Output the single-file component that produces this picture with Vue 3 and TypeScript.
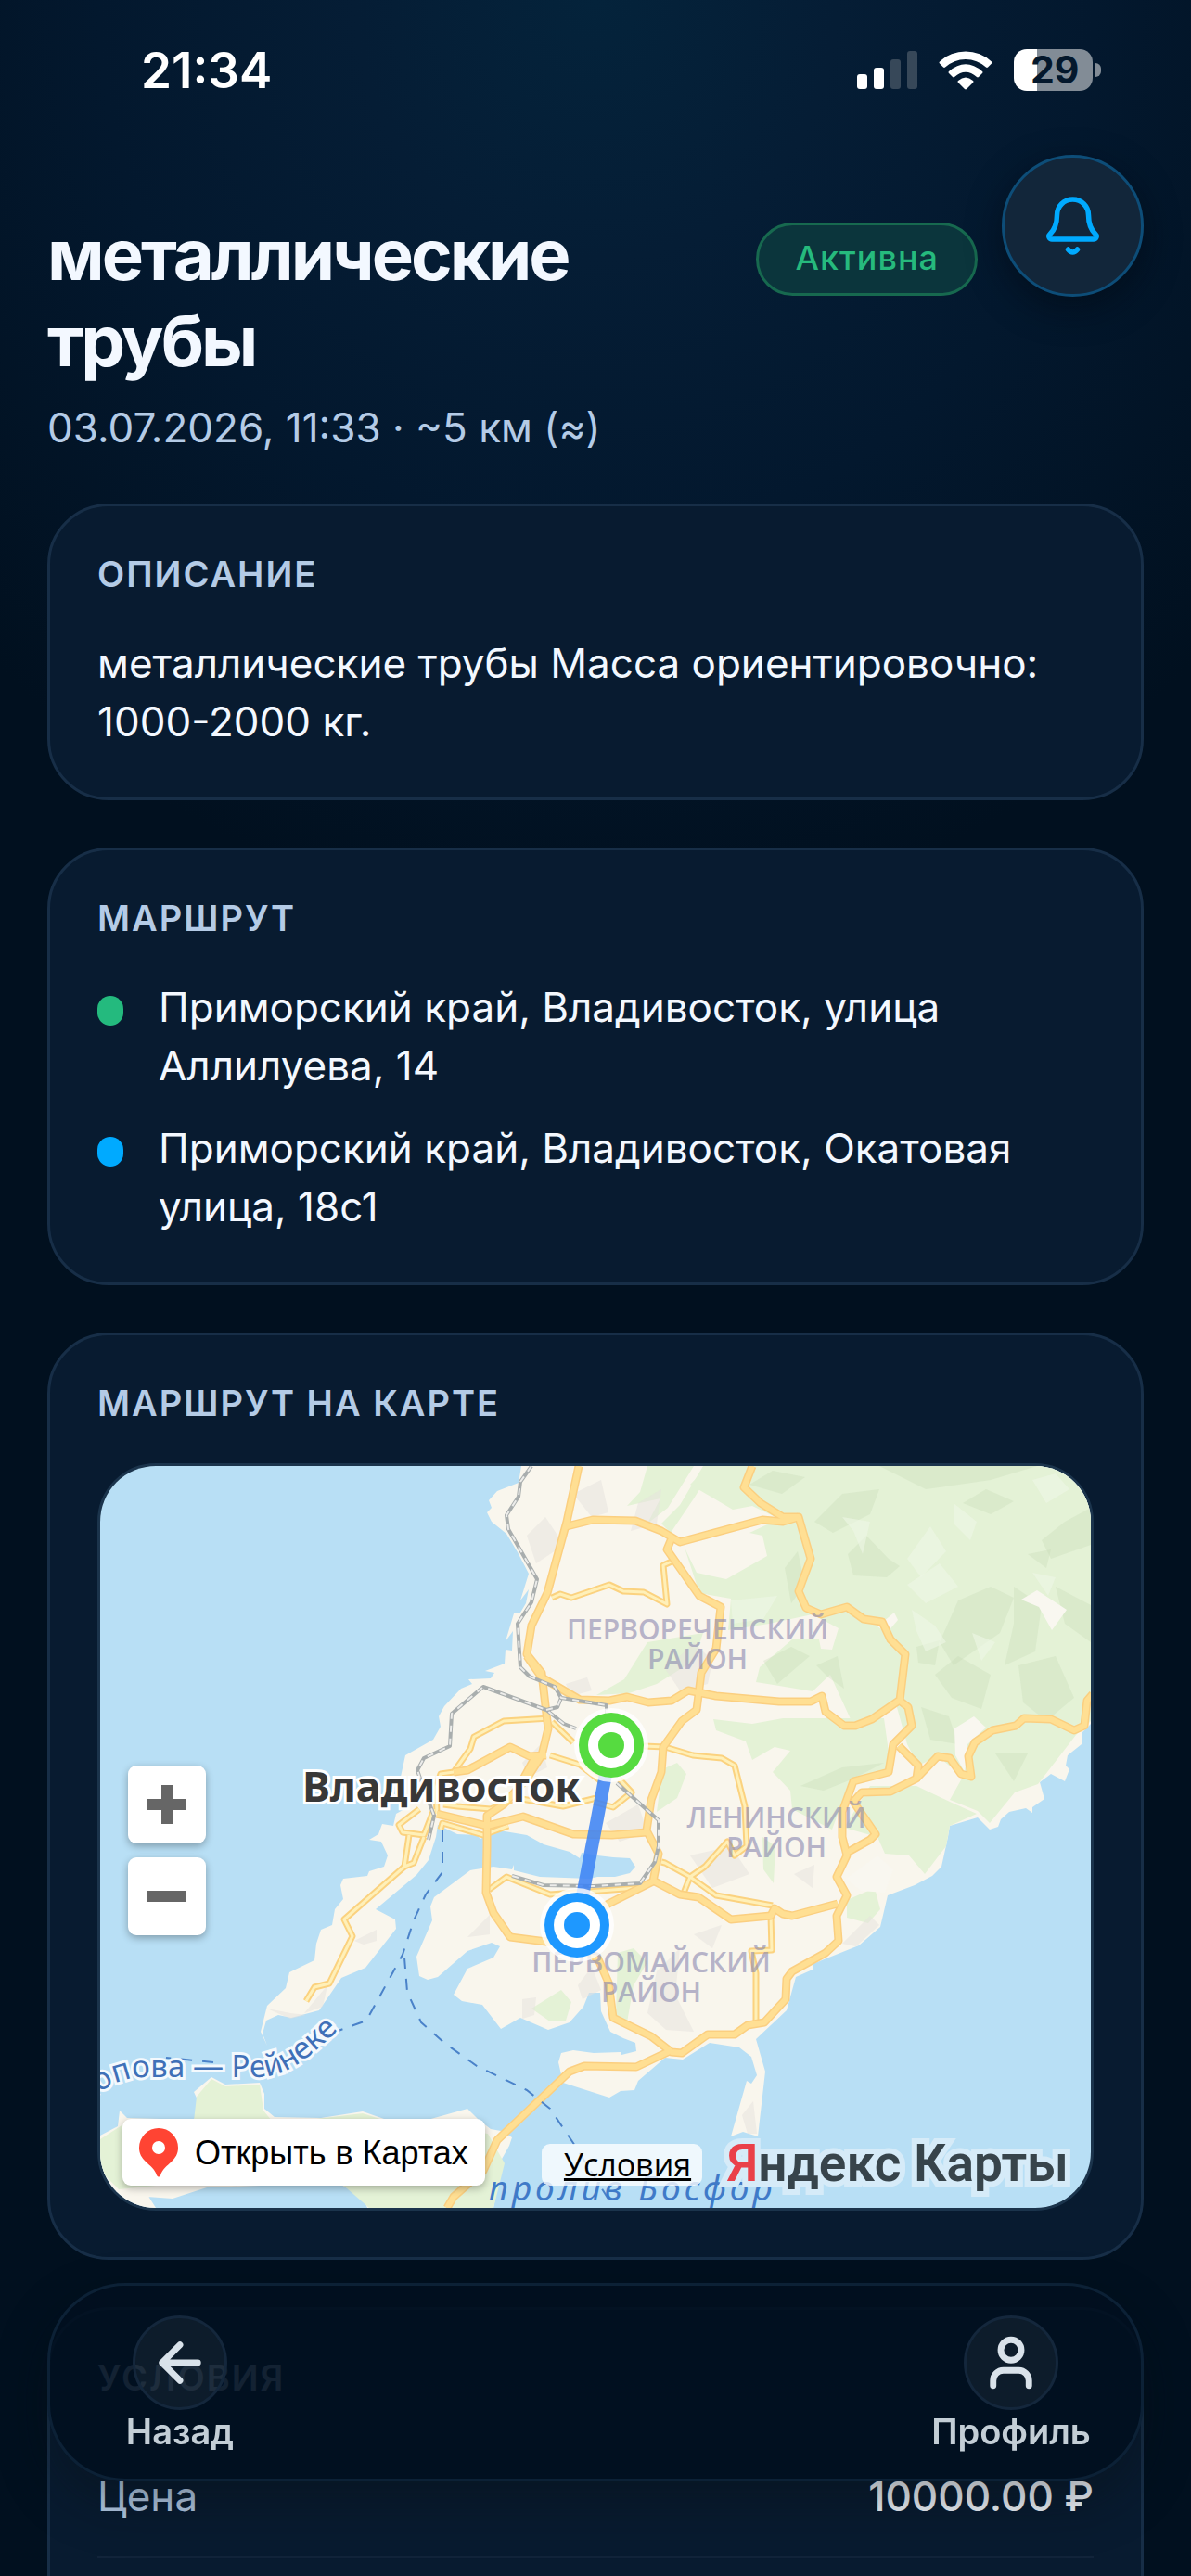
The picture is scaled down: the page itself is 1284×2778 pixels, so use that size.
<script setup lang="ts">
interface RoutePoint {
  kind: 'from' | 'to'
  address: string
}

interface DistrictLabel {
  x: number
  y: number
  name: string
}

const points: RoutePoint[] = [
  { kind: 'from', address: 'Приморский край, Владивосток, улица Аллилуева, 14' },
  { kind: 'to', address: 'Приморский край, Владивосток, Окатовая улица, 18с1' },
]

const districts: DistrictLabel[] = [
  { x: 644, y: 187, name: 'ПЕРВОРЕЧЕНСКИЙ' },
  { x: 729, y: 390, name: 'ЛЕНИНСКИЙ' },
  { x: 594, y: 546, name: 'ПЕРВОМАЙСКИЙ' },
]

const mainland =
  '454,0 451,18 428,27 419,37 422,45 417,50 422,60 438,73 450,93 462,116 453,145 462,133 459,148 453,158 446,159 437,189 445,178 444,199 437,198 436,213 415,221 425,223 421,229 397,230 401,235 389,240 371,259 365,270 367,281 359,295 329,312 324,335 328,370 319,375 316,388 304,386 300,397 290,403 303,405 310,420 306,432 290,437 288,442 262,445 259,452 262,467 253,478 250,495 238,500 233,515 231,533 204,546 200,563 180,582 173,610 180,625 175,612 179,598 192,592 206,595 236,587 260,552 286,541 319,499 318,489 297,478 341,441 354,425 362,400 364,387 385,397 406,398 410,402 430,393 460,398 478,408 506,416 517,423 519,417 536,420 553,422 571,423 577,432 571,439 555,443 536,443 528,445 474,443 446,436 446,430 444,435 424,432 399,436 360,465 356,475 358,490 341,529 344,550 353,554 364,551 396,523 422,514 431,518 424,530 396,542 381,570 390,577 412,581 432,607 453,595 483,608 506,600 521,583 527,568 539,568 540,588 550,610 564,617 577,622 578,631 562,635 561,632 532,633 510,630 497,633 494,643 499,665 549,681 561,674 576,673 580,663 609,638 628,640 657,622 689,627 702,637 708,657 702,666 697,663 680,723 693,718 709,723 717,653 707,618 740,587 750,551 768,543 768,537 818,517 841,497 849,463 878,452 897,442 907,432 914,400 916,388 946,379 959,392 968,389 971,381 980,373 998,369 1005,374 1005,368 1018,359 1013,341 1025,332 1040,340 1045,327 1041,323 1043,312 1058,300 1059,287 1068,278 1068,0'

const island =
  '0,722 19,712 21,695 29,703 101,705 108,690 101,675 120,659 135,667 172,665 177,677 177,693 188,702 238,703 283,696 306,704 353,705 396,693 408,705 421,715 432,717 444,724 441,733 428,756 431,767 424,800 288,800 283,788 256,773 115,778 78,790 51,788 46,778 60,800 0,800'

const greens: string[] = [
  '655,0 636,20 682,47 703,43 732,57 700,72 714,75 719,97 675,122 643,115 630,88 646,137 680,143 677,177 721,170 768,160 796,175 789,198 777,197 775,187 746,187 711,217 707,233 732,237 768,243 787,225 809,273 839,273 857,253 870,300 882,323 903,313 930,335 916,360 946,372 959,385 986,352 1011,343 1052,290 1068,275 1068,0',
  '661,273 703,278 736,272 845,272 853,330 811,343 796,373 789,392 746,370 744,350 725,330 744,307 727,303 703,317 696,297 664,285',
  '590,0 640,0 612,45 590,62 604,35 568,43 582,28',
  '650,0 662,0 640,35 615,72 605,62 625,42',
  '535,247 565,230 590,190 650,180 640,210 600,235 570,245',
  '802,390 830,345 880,345 916,362 945,375 916,388 912,410 889,440 872,420 846,418 838,400',
  '805,468 835,455 841,478 828,493 805,487',
  '714,400 728,410 726,450 715,435',
  '606,327 622,320 632,332 622,358 600,373',
  '558,525 575,520 590,535 575,560 568,600 556,592',
  '465,585 497,565 508,578 502,598 485,599',
  '104,680 120,661 135,669 172,667 176,695 185,706 101,706',
  '0,726 28,708 100,706 200,708 283,698 320,710 360,712 418,720 436,752 424,800 290,800 258,772 100,772 40,778 20,780 0,760',
]

const darkFacets: string[] = [
  '840,0 890,25 960,15 1010,0 905,0',
  '806,95 826,75 850,100 862,108 848,120 812,118',
  '1040,60 1068,45 1068,85 1025,100 1015,80',
  '905,190 925,145 960,130 985,142 970,180 920,215',
  '985,130 1015,150 1008,200 975,215 985,170',
  '900,225 925,205 960,225 950,262 918,250',
  '990,215 1030,205 1050,250 1020,275 995,255',
  '770,60 800,30 840,25 830,52 790,72',
  '715,210 745,195 765,205 730,235',
  '880,195 905,188 900,215 882,212',
  '965,310 1000,310 985,340',
  '1000,95 1025,90 1020,110',
  '755,345 800,325 845,320 810,338 780,350',
  '700,20 735,30 760,12 725,5',
  '885,260 915,270 925,300 895,295',
  '930,40 955,25 985,38 960,52',
  '1030,130 1068,150 1068,190 1040,170',
  '738,110 752,92 760,128 745,148',
  '772,215 795,205 802,240 785,228',
]

const lightFacets: string[] = [
  '870,100 895,65 912,92 885,120',
  '875,155 900,172 912,190 890,200 880,178',
  '920,40 945,60 938,80 920,62',
  '800,55 830,60 822,95 812,70',
  '1005,15 1030,8 1045,25 1020,40',
  '870,128 905,105 925,130 890,148',
  '680,145 730,140 715,165 682,170',
  '1005,115 1030,120 1022,140',
  '940,180 965,190 950,210',
]

const greyFacets: string[] = [
  '460,75 480,55 500,85 470,105',
  '510,30 540,15 548,50 530,55',
  '580,40 605,25 600,62 572,70',
  '610,220 640,190 660,210 655,235 625,242',
  '502,235 525,228 530,242 508,248',
  '545,385 580,365 590,395 560,405',
  '455,320 475,300 482,325 462,335',
  '274,512 298,500 298,512 284,516',
  '220,590 245,560 240,583',
  '180,585 205,590 222,592 205,596',
  '636,420 680,410 700,440 660,455',
  '590,590 600,545 625,520 620,570 640,610 610,608',
  '748,440 770,430 768,455',
  '800,515 830,485 840,495 815,518',
  '692,700 704,685 708,720 698,720',
  '455,575 470,573 468,592 455,596',
  '396,508 420,484 420,505',
  '640,505 670,495 660,520',
  '515,560 530,540 540,565 520,575',
]

const whitePatches: string[] = [
  '993,144 1010,134 1042,155 1026,177 1012,152',
  '921,283 942,270 955,282 935,300 932,330 922,312',
  '804,445 838,420 855,435 846,460 820,458',
  '838,173 856,158 860,166 848,180',
]

const trunkRoads: string[] = [
  '516,0 503,60 482,137 465,172 460,203 476,223 481,267 483,283 476,312 460,337 435,365 417,377 417,410 416,460 424,482 442,508 481,513 510,513 537,532 548,557 553,595 594,615 616,632 627,633 655,613 684,613 698,603 716,600 739,575 740,553 746,545 782,525 796,512 794,485 805,463 794,443 805,420 800,400 800,373 812,340 850,330 855,300 875,280 871,260 862,253 868,203 852,187 843,168 823,165 805,152 777,160 761,153 753,135 766,100 753,55 736,55 712,40 694,23 703,0',
  '503,65 531,58 577,59 605,70 625,82 714,58 736,60 753,55',
  '616,78 611,90 646,140 669,152 664,197 648,223 643,263 627,275 607,303 605,330 594,360 589,393 602,418 596,448 548,472 520,490',
  '460,205 476,228 517,252 549,253 568,249 591,255 616,253 634,242 664,248 732,254 766,254 778,248 782,265 802,280 814,280 832,273 861,253',
  '861,302 882,323 880,337 852,351 821,352 812,362 836,397 830,403 803,418',
  '880,337 903,313 916,315 928,332 939,335 936,313 943,298 962,285 987,280 996,272 1025,273 1050,285 1061,280 1064,253 1070,246',
  '381,330 396,328 442,303 463,313 481,312',
  '363,375 417,388 456,378 510,397 552,398 589,395',
  '596,447 625,462 645,465 680,489 723,485 727,477 736,483 746,485 795,472',
  '374,800 381,788 413,760 428,727 506,653 522,647 578,648 616,630',
  '470,312 452,345',
]

const minorRoads: string[] = [
  '487,142 496,138 508,142 549,128 564,135 586,136 611,149 607,107 616,103',
  '485,272 435,275 403,292 399,305 381,330 367,332 362,347 363,375',
  '485,312 517,322 540,340',
  '487,276 510,298',
  '344,370 322,387 326,395 349,398 360,370',
  '333,398 328,432 338,428 349,400',
  '328,432 263,489 272,507 247,558 231,562 222,577',
  '370,365 385,367 421,370 449,358 499,367 535,358',
  '367,392 369,385 413,398 440,388',
  '586,302 609,303 639,312 670,315 684,323 695,367 697,410 684,420 676,405 652,432 636,443 628,463',
  '605,427 609,428 636,443 664,463 725,474',
  '723,485 724,522 702,523 707,547 707,604',
  '419,457 438,443 485,462 552,457 578,455',
  '532,362 553,368 573,352 560,338',
]

const railways: string[] = [
  '465,0 453,17 451,33 438,53 440,68 471,122 465,147 450,170 453,217 463,227 490,238 497,250 546,258 546,268',
  '513,283 500,278 481,263 413,238 379,267 377,302 349,315 342,328 347,343 360,377 354,403',
  '481,263 493,260 497,250',
  '557,342 602,382 602,410 598,427 582,450 532,453 478,452 444,442',
]

const ferries: string[] = [
  '369,393 369,438 351,462 338,490 326,527 287,598 254,610',
  '328,530 331,567 346,600 371,622 406,647 460,673 485,693 510,730 552,797',
  '122,643 71,638',
]
</script>

<template>
  <div class="screen">
    <div class="status">
      <time class="clock">21:34</time>
      <div class="indicators">
        <svg width="65" height="41" viewBox="0 0 65 41" aria-hidden="true">
          <rect x="0" y="25" width="11" height="16" rx="3" fill="#fff" />
          <rect x="18" y="18" width="11" height="23" rx="3" fill="#fff" />
          <rect x="36" y="9" width="11" height="32" rx="3" fill="#374859" />
          <rect x="54" y="0" width="11" height="41" rx="3" fill="#374859" />
        </svg>
        <svg width="58" height="43" viewBox="0 0 58 43" aria-hidden="true">
          <path
            fill="#fff"
            d="M1 12.500a41 41 0 0 1 56 0q1 1 0 2l-4 4q-1 .8-2 0a33 33 0 0 0-44 0q-1 .8-2 0l-4-4q-1-1 0-2ZM11 23q18-15.500 36 0 1 1 0 2l-4 4q-1 .8-2 0-12-10.500-24 0-1 .8-2 0l-4-4q-1-1 0-2ZM21 33q8-7 16 0 1 1 0 2l-7 7q-1 .8-2 0l-7-7q-1-1 0-2Z"
          />
        </svg>
        <div class="battery">
          <span class="cell">29</span>
          <span class="nub"></span>
        </div>
      </div>
    </div>

    <header class="head">
      <div class="heading">
        <h1>металлические трубы</h1>
        <p>03.07.2026, 11:33 · ~5 км (≈)</p>
      </div>
      <span class="badge">Активна</span>
      <button class="bell" type="button" aria-label="Уведомления">
        <svg width="57" height="63" viewBox="0 0 57 63" aria-hidden="true">
          <g fill="none" stroke="#00aaff" stroke-width="5.500" stroke-linecap="round" stroke-linejoin="round">
            <path d="M28.500 3C19 3 11.500 10.500 11.500 20c0 10-2.500 15.500-7.500 20.500-2.500 2.500-.5 5.500 2 5.500h45c2.500 0 4.500-3 2-5.500-5-5-7.500-10.500-7.500-20.500C45.500 10.500 38 3 28.500 3Z" />
            <path d="M23.500 57q5 6 10 0" />
          </g>
        </svg>
      </button>
    </header>

    <main class="content">
      <section class="card">
        <h2>Описание</h2>
        <p>металлические трубы Масса ориентировочно: 1000-2000 кг.</p>
      </section>

      <section class="card">
        <h2>Маршрут</h2>
        <ul class="route">
          <li v-for="point in points" :key="point.kind">
            <span class="dot" :class="point.kind"></span>
            <span>{{ point.address }}</span>
          </li>
        </ul>
      </section>

      <section class="card">
        <h2>Маршрут на карте</h2>
        <div class="map">
          <svg class="canvas" viewBox="0 0 1068 800" preserveAspectRatio="xMidYMid slice">
            <rect width="1068" height="800" fill="#b8dff5" />
            <polygon :points="mainland" fill="#f9f6ed" />
            <polygon :points="island" fill="#f9f6ed" />
            <polygon v-for="shape in greens" :key="shape" :points="shape" fill="#e4f2d6" />
            <polygon v-for="shape in darkFacets" :key="shape" :points="shape" fill="#c3d7b4" opacity="0.3" />
            <polygon v-for="shape in lightFacets" :key="shape" :points="shape" fill="#eff6e6" opacity="0.6" />
            <polygon v-for="shape in greyFacets" :key="shape" :points="shape" fill="#e6e2de" opacity="0.5" />
            <polygon v-for="shape in whitePatches" :key="shape" :points="shape" fill="#f9f7f0" />

            <g class="lines">
              <polyline v-for="line in minorRoads" :key="line" :points="line" stroke="#fbd27f" stroke-width="7" />
              <polyline v-for="line in minorRoads" :key="line" :points="line" stroke="#fff0b8" stroke-width="3" />
              <polyline v-for="line in trunkRoads" :key="line" :points="line" stroke="#fbcf80" stroke-width="9" />
              <polyline v-for="line in trunkRoads" :key="line" :points="line" stroke="#ffdf93" stroke-width="6" />
              <polyline v-for="line in railways" :key="line" :points="line" stroke="#a9aeae" stroke-width="4" />
              <polyline v-for="line in railways" :key="line" :points="line" stroke="#ececea" stroke-width="2" stroke-dasharray="7 7" />
              <polyline v-for="line in ferries" :key="line" :points="line" stroke="#4a82c9" stroke-width="2" stroke-dasharray="12 11" />
            </g>

            <g class="district">
              <template v-for="label in districts" :key="label.name">
                <text :x="label.x" :y="label.y">{{ label.name }}</text>
                <text :x="label.x" :y="label.y + 32">РАЙОН</text>
              </template>
            </g>

            <path id="ferry-name" d="M-24 700C0 668 24 659 52 659H160C205 661 225 637 270 596" fill="none" />
            <text class="ferry"><textPath href="#ferry-name" startOffset="9">Попова — Рейнеке</textPath></text>
            <text class="strait" x="419" y="792">пролив Босфор</text>
            <text class="city" x="368" y="362">Владивосток</text>

            <line x1="551" y1="301" x2="514" y2="495" stroke="#3b82f6" stroke-width="14" opacity="0.86" />
            <g v-for="pin in [{ x: 551, y: 301, c: '#56db40' }, { x: 514, y: 495, c: '#1e98ff' }]" :key="pin.x">
              <circle :cx="pin.x" :cy="pin.y" r="40" fill="#fff" opacity="0.8" />
              <circle :cx="pin.x" :cy="pin.y" r="35" :fill="pin.c" />
              <circle :cx="pin.x" :cy="pin.y" r="25" fill="#fff" />
              <circle :cx="pin.x" :cy="pin.y" r="14" :fill="pin.c" />
            </g>
          </svg>

          <div class="zoom">
            <button type="button" aria-label="Приблизить">
              <svg width="42" height="42" viewBox="0 0 42 42" aria-hidden="true"><path d="M15 0h12v15h15v12H27v15H15V27H0V15h15Z" fill="#666" /></svg>
            </button>
            <button type="button" aria-label="Отдалить">
              <svg width="42" height="42" viewBox="0 0 42 42" aria-hidden="true"><path d="M0 15h42v12H0Z" fill="#666" /></svg>
            </button>
          </div>

          <button class="open" type="button">
            <svg width="42" height="53" viewBox="0 0 42 53" aria-hidden="true">
              <path fill="#ff4433" fill-rule="evenodd" d="M21 0a21 21 0 0 1 21 21c0 7-3 11-7 15-5 5-10 8-12 15q-2 3-4 0c-2-7-7-10-12-15-4-4-7-8-7-15A21 21 0 0 1 21 0Zm0 14a7 7 0 1 0 0 14 7 7 0 0 0 0-14Z" />
            </svg>
            <span>Открыть в Картах</span>
          </button>

          <div class="legal">
            <a class="terms" href="#terms">Условия</a>
            <a class="logo" href="#maps"><b>Я</b>ндекс Карты</a>
          </div>
        </div>
      </section>

      <section class="card last">
        <h2>Условия</h2>
        <dl class="row">
          <dt>Цена</dt>
          <dd>10000.00 ₽</dd>
        </dl>
      </section>
    </main>

    <nav class="dock">
      <button type="button">
        <span class="round">
          <svg width="66" height="66" viewBox="0 0 24 24" aria-hidden="true"><path d="M19 12H5M12 19l-7-7 7-7" /></svg>
        </span>
        <span>Назад</span>
      </button>
      <button type="button">
        <span class="round">
          <svg width="66" height="66" viewBox="0 0 24 24" aria-hidden="true">
            <path d="M19 21v-2a4 4 0 0 0-4-4H9a4 4 0 0 0-4 4v2" />
            <circle cx="12" cy="7" r="4" />
          </svg>
        </span>
        <span>Профиль</span>
      </button>
    </nav>
  </div>
</template>

<style>
body {
  margin: 0;
  background: #01101f;
}
</style>

<style scoped>
* {
  box-sizing: border-box;
}

.screen {
  display: flex;
  flex-direction: column;
  height: 100vh;
  overflow: hidden;
  padding: 0 51px;
  font-family: Inter, Roboto, sans-serif;
  color: #f3f8ff;
  background: radial-gradient(ellipse 72% 36% at 50% 0, #04233b 0%, #051d35 28%, #03182e 58%, #01101f 100%) #01101f;
}

h1,
h2,
p,
ul,
dl,
dd {
  margin: 0;
  padding: 0;
}

button {
  padding: 0;
  border: 0;
  font: inherit;
  color: inherit;
  background: none;
}

.status {
  flex: none;
  display: flex;
  align-items: center;
  justify-content: space-between;
  height: 167px;
  padding: 0 46px 16px 101px;
}

.clock {
  font-size: 53px;
  font-weight: 600;
  color: #fff;
}

.indicators {
  display: flex;
  align-items: center;
  gap: 23px;
}

.battery {
  display: flex;
  align-items: center;
  gap: 3px;
}

.cell {
  width: 85px;
  height: 45px;
  padding-left: 18px;
  border-radius: 14px;
  font-size: 41px;
  line-height: 45px;
  font-weight: 700;
  color: #04182c;
  background: linear-gradient(90deg, #fff 25px, #828c96 25px);
}

.nub {
  width: 6px;
  height: 15px;
  border-radius: 0 6px 6px 0;
  background: #828c96;
}

.head {
  flex: none;
  display: flex;
  align-items: flex-start;
  gap: 26px;
  margin-bottom: 51px;
}

.heading {
  flex: 1;
  margin-top: 61px;
}

h1 {
  font-size: 76px;
  line-height: 93px;
  font-weight: 700;
  letter-spacing: -3px;
}

.heading p {
  margin-top: 16px;
  font-size: 44px;
  line-height: 62px;
  color: #b4cbe6;
}

.badge {
  margin-top: 73px;
  padding: 0 39px 2px;
  border: 3px solid #17694f;
  border-radius: 40px;
  font-size: 36px;
  line-height: 71px;
  font-weight: 500;
  letter-spacing: 1px;
  color: #26ba7d;
  background: #0b353c;
}

.bell {
  display: flex;
  align-items: center;
  justify-content: center;
  width: 153px;
  height: 153px;
  border: 3px solid #0d4d78;
  border-radius: 50%;
  background: #12263a;
  box-shadow: 0 12px 36px rgba(0, 8, 16, 0.5);
}

.content {
  flex: 1;
  display: flex;
  flex-direction: column;
  gap: 51px;
}

.card {
  flex: none;
  padding: 48px 51px 50px;
  border: 3px solid #172e47;
  border-radius: 66px;
  background: #081b30;
  font-size: 44px;
  line-height: 63px;
}

h2 {
  margin-bottom: 39px;
  font-size: 38px;
  line-height: 51px;
  font-weight: 600;
  letter-spacing: 2px;
  text-transform: uppercase;
  color: #b4cbe6;
}

.route {
  display: flex;
  flex-direction: column;
  gap: 26px;
  list-style: none;
}

.route li {
  display: flex;
  gap: 38px;
}

.dot {
  flex: none;
  width: 28px;
  height: 32px;
  margin-top: 19px;
  border-radius: 14px;
}

.from {
  background: #24ba7e;
}

.to {
  background: #00aaff;
}

.map {
  position: relative;
  height: 806px;
  overflow: hidden;
  border: 3px solid #1b344c;
  border-radius: 63px;
}

.canvas {
  display: block;
  width: 100%;
  height: 100%;
}

.lines {
  fill: none;
  stroke-linejoin: round;
}

.district {
  font-family: 'Open Sans', 'Noto Sans', sans-serif;
  font-size: 30px;
  font-weight: 600;
  text-anchor: middle;
  fill: #8a88b0;
  opacity: 0.6;
}

.ferry,
.strait,
.city {
  font-family: 'Noto Sans', 'Open Sans', sans-serif;
  paint-order: stroke;
}

.ferry {
  font-size: 33px;
  fill: #3f70b8;
  stroke: #f4f9fd;
  stroke-width: 6px;
}

.strait {
  font-size: 37px;
  font-style: italic;
  letter-spacing: 4px;
  fill: #3f7ac8;
}

.city {
  font-size: 45px;
  font-weight: 700;
  text-anchor: middle;
  fill: #383838;
  stroke: #fff;
  stroke-width: 6px;
}

.zoom {
  position: absolute;
  left: 30px;
  top: 323px;
  display: flex;
  flex-direction: column;
  gap: 15px;
}

.zoom button {
  display: flex;
  align-items: center;
  justify-content: center;
  width: 84px;
  height: 84px;
  border-radius: 9px;
  background: #fff;
  box-shadow: 0 3px 9px rgba(0, 0, 0, 0.3);
}

.open {
  position: absolute;
  left: 24px;
  bottom: 24px;
  display: flex;
  align-items: center;
  gap: 18px;
  height: 72px;
  padding: 0 18px;
  border-radius: 9px;
  font-family: 'Liberation Sans', Arial, sans-serif;
  font-size: 36px;
  color: #000;
  background: #fff;
  box-shadow: 0 3px 9px rgba(0, 0, 0, 0.3);
}

.legal {
  position: absolute;
  right: 24px;
  bottom: 10px;
  display: flex;
  align-items: center;
  gap: 27px;
}

.terms {
  margin-top: 2px;
  padding: 0 12px 0 24px;
  border-radius: 9px;
  font-family: 'Open Sans', sans-serif;
  font-size: 34px;
  line-height: 45px;
  color: #000;
  background: rgba(255, 255, 255, 0.78);
}

.logo {
  font-family: Roboto, sans-serif;
  font-size: 55px;
  line-height: 76px;
  font-weight: 600;
  text-decoration: none;
  color: #37444b;
  -webkit-text-stroke: 12px #d6ebf8;
  paint-order: stroke fill;
}

.logo b {
  font-weight: 600;
  color: #ea4049;
}

.last {
  flex: 1 0 auto;
  border-bottom: 0;
  border-radius: 66px 66px 0 0;
}

.row {
  display: flex;
  justify-content: space-between;
  padding: 32px 0;
  border-bottom: 3px solid #12243a;
}

.row dt {
  color: #b4cbe6;
}

.row dd {
  font-weight: 500;
}

.dock {
  position: fixed;
  left: 51px;
  right: 51px;
  bottom: 102px;
  display: flex;
  justify-content: space-between;
  padding: 32px 51px 27px;
  border: 3px solid #0c2136;
  border-radius: 84px;
  background: rgba(1, 16, 31, 0.9);
  box-shadow: 0 24px 54px rgba(8, 14, 18, 0.36);
}

.dock button {
  display: flex;
  flex-direction: column;
  align-items: center;
  min-width: 178px;
  font-size: 38px;
  line-height: 47px;
  font-weight: 600;
  color: #c3ced6;
}

.round {
  display: flex;
  align-items: center;
  justify-content: center;
  width: 102px;
  height: 102px;
  border: 3px solid #14273c;
  border-radius: 50%;
  background: rgba(255, 255, 255, 0.05);
}

.round svg {
  fill: none;
  stroke: #d9e2ea;
  stroke-width: 2.500;
  stroke-linecap: round;
  stroke-linejoin: round;
}
</style>
